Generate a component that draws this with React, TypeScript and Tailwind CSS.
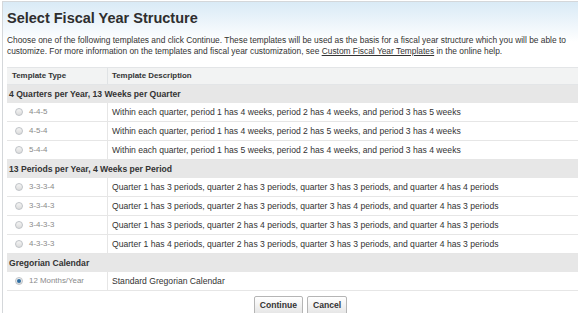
import React from "react";

type Row = { code: string; text: string; checked?: boolean };
type Group = { title: string; rows: Row[] };

const groups: Group[] = [
  {
    title: "4 Quarters per Year, 13 Weeks per Quarter",
    rows: [
      { code: "4-4-5", text: "Within each quarter, period 1 has 4 weeks, period 2 has 4 weeks, and period 3 has 5 weeks" },
      { code: "4-5-4", text: "Within each quarter, period 1 has 4 weeks, period 2 has 5 weeks, and period 3 has 4 weeks" },
      { code: "5-4-4", text: "Within each quarter, period 1 has 5 weeks, period 2 has 4 weeks, and period 3 has 4 weeks" },
    ],
  },
  {
    title: "13 Periods per Year, 4 Weeks per Period",
    rows: [
      { code: "3-3-3-4", text: "Quarter 1 has 3 periods, quarter 2 has 3 periods, quarter 3 has 3 periods, and quarter 4 has 4 periods" },
      { code: "3-3-4-3", text: "Quarter 1 has 3 periods, quarter 2 has 3 periods, quarter 3 has 4 periods, and quarter 4 has 3 periods" },
      { code: "3-4-3-3", text: "Quarter 1 has 3 periods, quarter 2 has 4 periods, quarter 3 has 3 periods, and quarter 4 has 3 periods" },
      { code: "4-3-3-3", text: "Quarter 1 has 4 periods, quarter 2 has 3 periods, quarter 3 has 3 periods, and quarter 4 has 3 periods" },
    ],
  },
  {
    title: "Gregorian Calendar",
    rows: [{ code: "12 Months/Year", text: "Standard Gregorian Calendar", checked: true }],
  },
];

function Radio({ checked }: { checked?: boolean }) {
  return (
    <span className="flex h-[8px] w-[8px] shrink-0 items-center justify-center rounded-full border border-[#bfc3c7] bg-gradient-to-b from-[#f4f4f4] to-[#dcdcdc]">
      {checked && <span className="h-[4px] w-[4px] rounded-full bg-[#2f6ea3]" />}
    </span>
  );
}

export default function App() {
  return (
    <div className="h-[313px] w-[578px] overflow-hidden bg-white pl-[2px] pt-[1px] font-['Liberation_Sans',Arial,sans-serif] text-[#333]">
      <div className="h-full w-[600px] border-l border-t border-[#d4d7da] bg-gradient-to-b from-[#d9eaf6] via-white via-[40px] to-white pl-[4px] pt-[8px]">
        <h1 className="text-[14.5px] font-bold leading-[17px] text-[#2e2e2e]">Select Fiscal Year Structure</h1>
        <p className="mt-[8px] w-[570px] text-[8.4px] leading-[11px]">
          Choose one of the following templates and click Continue. These templates will be used as the basis for a fiscal
          year structure which you will be able to customize. For more information on the templates and fiscal year
          customization, see <span className="underline">Custom Fiscal Year Templates</span> in the online help.
        </p>

        <div className="mt-[10px] text-[8.6px]">
          {/* header */}
          <div className="flex h-[18px] items-center border-y border-[#e3e5e7] bg-[#f2f3f3] text-[7.9px] font-bold">
            <div className="flex h-full w-[101px] items-center border-r border-[#e0e3e5] pl-[5px]">Template Type</div>
            <div className="pl-[4px]">Template Description</div>
          </div>

          {groups.map((g) => (
            <div key={g.title}>
              <div className="flex h-[18px] items-center bg-[#e7e7e7] pl-[2px] font-bold">{g.title}</div>
              {g.rows.map((r) => (
                <div key={r.code} className="flex h-[19px] items-center border-b border-[#e6e6e6] bg-white">
                  <div className="flex h-full w-[101px] items-center gap-[6px] border-r border-[#e6e6e6] pl-[8px] text-[7.9px] text-[#8a8a8a]">
                    <Radio checked={r.checked} />
                    {r.code}
                  </div>
                  <div className="pl-[4px]">{r.text}</div>
                </div>
              ))}
            </div>
          ))}

          <div className="mt-[5px] flex justify-center gap-[4px] pl-[14px] pr-[22px]">
            <button className="h-[19px] rounded-[2px] border border-[#b5b5b5] bg-gradient-to-b from-white to-[#e5e5e5] px-[5px] text-[8.6px] font-bold text-[#333]">
              Continue
            </button>
            <button className="h-[19px] rounded-[2px] border border-[#b5b5b5] bg-gradient-to-b from-white to-[#e5e5e5] px-[5px] text-[8.6px] font-bold text-[#333]">
              Cancel
            </button>
          </div>
        </div>
      </div>
    </div>
  );
}
